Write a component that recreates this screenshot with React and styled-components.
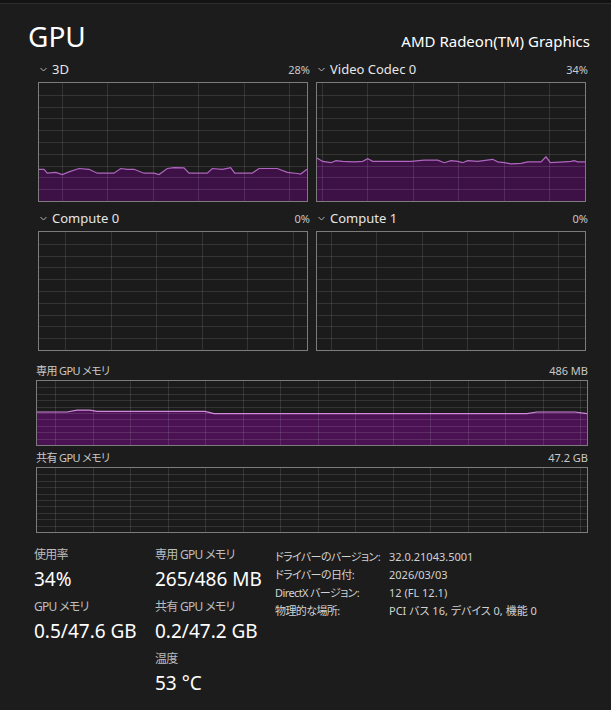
import styled, { createGlobalStyle } from "styled-components";

const GlobalStyle = createGlobalStyle`
  body {
    margin: 0;
    background: #1c1c1c;
    color: #ffffff;
    font-family: "Noto Sans", "Noto Sans CJK JP", sans-serif;
    font-feature-settings: "palt";
  }
`;

// utilisation samples, [x px, percent]
const engines = [
  {
    name: "3D",
    percent: "28%",
    colOffset: 22.7,
    data: [
      [0, 26.9], [5, 26.9], [8.3, 23.6], [16.7, 24.2], [23.3, 22.5], [30, 24.7],
      [40, 27.5], [50, 26.9], [58.3, 23.6], [75, 23.6], [81.7, 27.5], [88.3, 26.9],
      [95, 26.9], [105, 23.6], [115, 23.6], [120, 22.5], [128.3, 27.5], [135, 28.3],
      [145, 28.1], [150, 23.6], [168.3, 23.6], [173.3, 27.5], [183.3, 26.9],
      [191.7, 28.3], [195.7, 23.6], [213.3, 23.6], [220, 27.5], [238.3, 27.5],
      [248.3, 24.2], [258.3, 23.3], [261.7, 22.8], [268, 26.9],
    ],
  },
  {
    name: "Video Codec 0",
    percent: "34%",
    colOffset: 4.7,
    data: [
      [0, 36.4], [5.7, 33.6], [14, 32.5], [19, 34.2], [25.7, 33.6], [37.3, 33.1],
      [45.7, 33.6], [50.7, 35.8], [55.7, 33.6], [94, 33.6], [107.3, 34.7],
      [120.7, 34.7], [127.3, 32.5], [134, 34.2], [140.7, 33.6], [145.7, 32.5],
      [150.7, 34.2], [160.7, 33.6], [175.7, 35.3], [180.7, 33.1], [187.3, 32.5],
      [194, 31.4], [204, 31.9], [210.7, 33.1], [224, 33.1], [229, 37.5],
      [233.3, 32.5], [247.3, 33.1], [254, 33.6], [257.3, 34.2], [260.7, 33.1],
      [268, 33.1],
    ],
  },
  { name: "Compute 0", percent: "0%", colOffset: 26.3, data: [] },
  { name: "Compute 1", percent: "0%", colOffset: 13.7, data: [] },
];

const memory = [
  {
    name: "専用 GPU メモリ",
    total: "486 MB",
    data: [
      [0, 51.5], [30, 51.5], [40, 54.5], [53, 54.5], [60, 52.5], [168, 52.5],
      [177, 49], [490, 49], [500, 51.5], [538, 51.5], [550, 49],
    ],
  },
  { name: "共有 GPU メモリ", total: "47.2 GB", data: [] },
];

const stats = [
  [
    { label: "使用率", value: "34%" },
    { label: "GPU メモリ", value: "0.5/47.6 GB" },
  ],
  [
    { label: "専用 GPU メモリ", value: "265/486 MB" },
    { label: "共有 GPU メモリ", value: "0.2/47.2 GB" },
    { label: "温度", value: "53 °C" },
  ],
];

const details = [
  ["ドライバーのバージョン:", "32.0.21043.5001"],
  ["ドライバーの日付:", "2026/03/03"],
  ["DirectX バージョン:", "12 (FL 12.1)"],
  ["物理的な場所:", "PCI バス 16, デバイス 0, 機能 0"],
];

function Graph({ width, height, rows, colStep, colOffset, data, fill, stroke }) {
  const cols = [];
  for (let x = colOffset; x < width; x += colStep) cols.push(x);
  const lines = [];
  for (let i = 1; i < rows; i++) lines.push(Math.round((height / rows) * i) + 0.5);
  const pts = data.map(([x, v]) => `${x},${(height - (v / 100) * height).toFixed(1)}`);

  return (
    <svg width={width} height={height} style={{ display: "block" }}>
      {pts.length > 0 && (
        <path d={`M0,${height} L${pts.join(" L")} L${width},${height} Z`} fill={fill} />
      )}
      {lines.map((y) => (
        <line key={"r" + y} x1="0" x2={width} y1={y} y2={y} stroke="rgba(255,255,255,0.11)" />
      ))}
      {cols.map((x) => (
        <line
          key={"c" + x}
          x1={Math.round(x) + 0.5}
          x2={Math.round(x) + 0.5}
          y1="0"
          y2={height}
          stroke="rgba(255,255,255,0.11)"
        />
      ))}
      {pts.length > 0 && (
        <polyline points={pts.join(" ")} fill="none" stroke={stroke} strokeWidth="1.2" />
      )}
    </svg>
  );
}

function Chevron() {
  return (
    <svg width="7" height="5" viewBox="0 0 7 5">
      <polyline points="0.5,1 3.5,4 6.5,1" fill="none" stroke="#b5b5b5" strokeWidth="1" />
    </svg>
  );
}

export default function App() {
  return (
    <>
      <GlobalStyle />
      <TopBar />
      <Header>
        <Title>GPU</Title>
        <Model>AMD Radeon(TM) Graphics</Model>
      </Header>

      <EngineGrid>
        {engines.map((e) => (
          <div key={e.name}>
            <EngineLabel>
              <EngineName>
                <Chevron />
                {e.name}
              </EngineName>
              <Percent>{e.percent}</Percent>
            </EngineLabel>
            <Frame>
              <Graph
                width={268}
                height={118}
                rows={10}
                colStep={45.5}
                colOffset={e.colOffset}
                data={e.data}
                fill="#3e1146"
                stroke="#b066c0"
              />
            </Frame>
          </div>
        ))}
      </EngineGrid>

      <MemorySection>
        {memory.map((m) => (
          <div key={m.name}>
            <MemoryLabel>
              <JpText>{m.name}</JpText>
              <span>{m.total}</span>
            </MemoryLabel>
            <Frame>
              <Graph
                width={550}
                height={64}
                rows={10}
                colStep={37.5}
                colOffset={18}
                data={m.data}
                fill="#4a1252"
                stroke="#cf8adc"
              />
            </Frame>
          </div>
        ))}
      </MemorySection>

      <Stats>
        {stats.map((col, i) => (
          <StatColumn key={i} $width={i === 0 ? 121 : 120}>
            {col.map((s) => (
              <div key={s.label}>
                <StatLabel>{s.label}</StatLabel>
                <StatValue>{s.value}</StatValue>
              </div>
            ))}
          </StatColumn>
        ))}
        <Details>
          {details.map(([k, v]) => (
            <DetailRow key={k}>
              <DetailKey>{k}</DetailKey>
              <span>{v}</span>
            </DetailRow>
          ))}
        </Details>
      </Stats>
    </>
  );
}

const TopBar = styled.div`
  height: 3px;
  background: #131313;
  border-bottom: 1px solid #2d2d2d;
`;

const Header = styled.div`
  display: flex;
  justify-content: space-between;
  align-items: baseline;
  padding: 15px 21px 0 28px;
`;

const Title = styled.h1`
  margin: 0;
  font-size: 28px;
  font-weight: 400;
  line-height: 34px;
  color: #ffffff;
`;

const Model = styled.div`
  font-size: 15px;
  color: #ffffff;
`;

const EngineGrid = styled.div`
  display: grid;
  grid-template-columns: 270px 270px;
  column-gap: 8px;
  row-gap: 9px;
  padding-left: 38px;
  margin-top: 9px;
`;

const EngineLabel = styled.div`
  display: flex;
  justify-content: space-between;
  align-items: center;
  height: 14px;
  margin: 0 -2px 6px 2px;
  font-size: 11px;
  color: #c8c8c8;
`;

const EngineName = styled.span`
  display: flex;
  align-items: center;
  gap: 5px;
  font-size: 13px;
  color: #e6e6e6;
`;

const Percent = styled.span`
  font-size: 11px;
`;

const Frame = styled.div`
  border: 1px solid #7c7c7c;
  background: #1b1b1b;
`;

const MemorySection = styled.div`
  display: flex;
  flex-direction: column;
  gap: 4px;
  width: 552px;
  padding-left: 36px;
  margin-top: 12px;
`;

const MemoryLabel = styled.div`
  display: flex;
  justify-content: space-between;
  align-items: center;
  height: 14px;
  margin-bottom: 3px;
  font-size: 11px;
  color: #c8c8c8;
`;

const JpText = styled.span`
  letter-spacing: -0.6px;
`;

const Stats = styled.div`
  display: flex;
  padding-left: 34px;
  margin-top: 15px;
`;

const StatColumn = styled.div`
  display: flex;
  flex-direction: column;
  gap: 9px;
  width: ${(p) => p.$width}px;
`;

const StatLabel = styled.div`
  font-size: 12px;
  line-height: 14px;
  letter-spacing: -0.7px;
  color: #bdbdbd;
  margin-bottom: 5px;
`;

const StatValue = styled.div`
  font-size: 19px;
  line-height: 24px;
  color: #ffffff;
`;

const Details = styled.div`
  display: flex;
  flex-direction: column;
  margin-top: 0;
`;

const DetailRow = styled.div`
  display: grid;
  grid-template-columns: 114px auto;
  font-size: 11px;
  line-height: 18px;
  color: #d2d2d2;
  white-space: nowrap;
`;

const DetailKey = styled.span`
  letter-spacing: -0.6px;
`;
